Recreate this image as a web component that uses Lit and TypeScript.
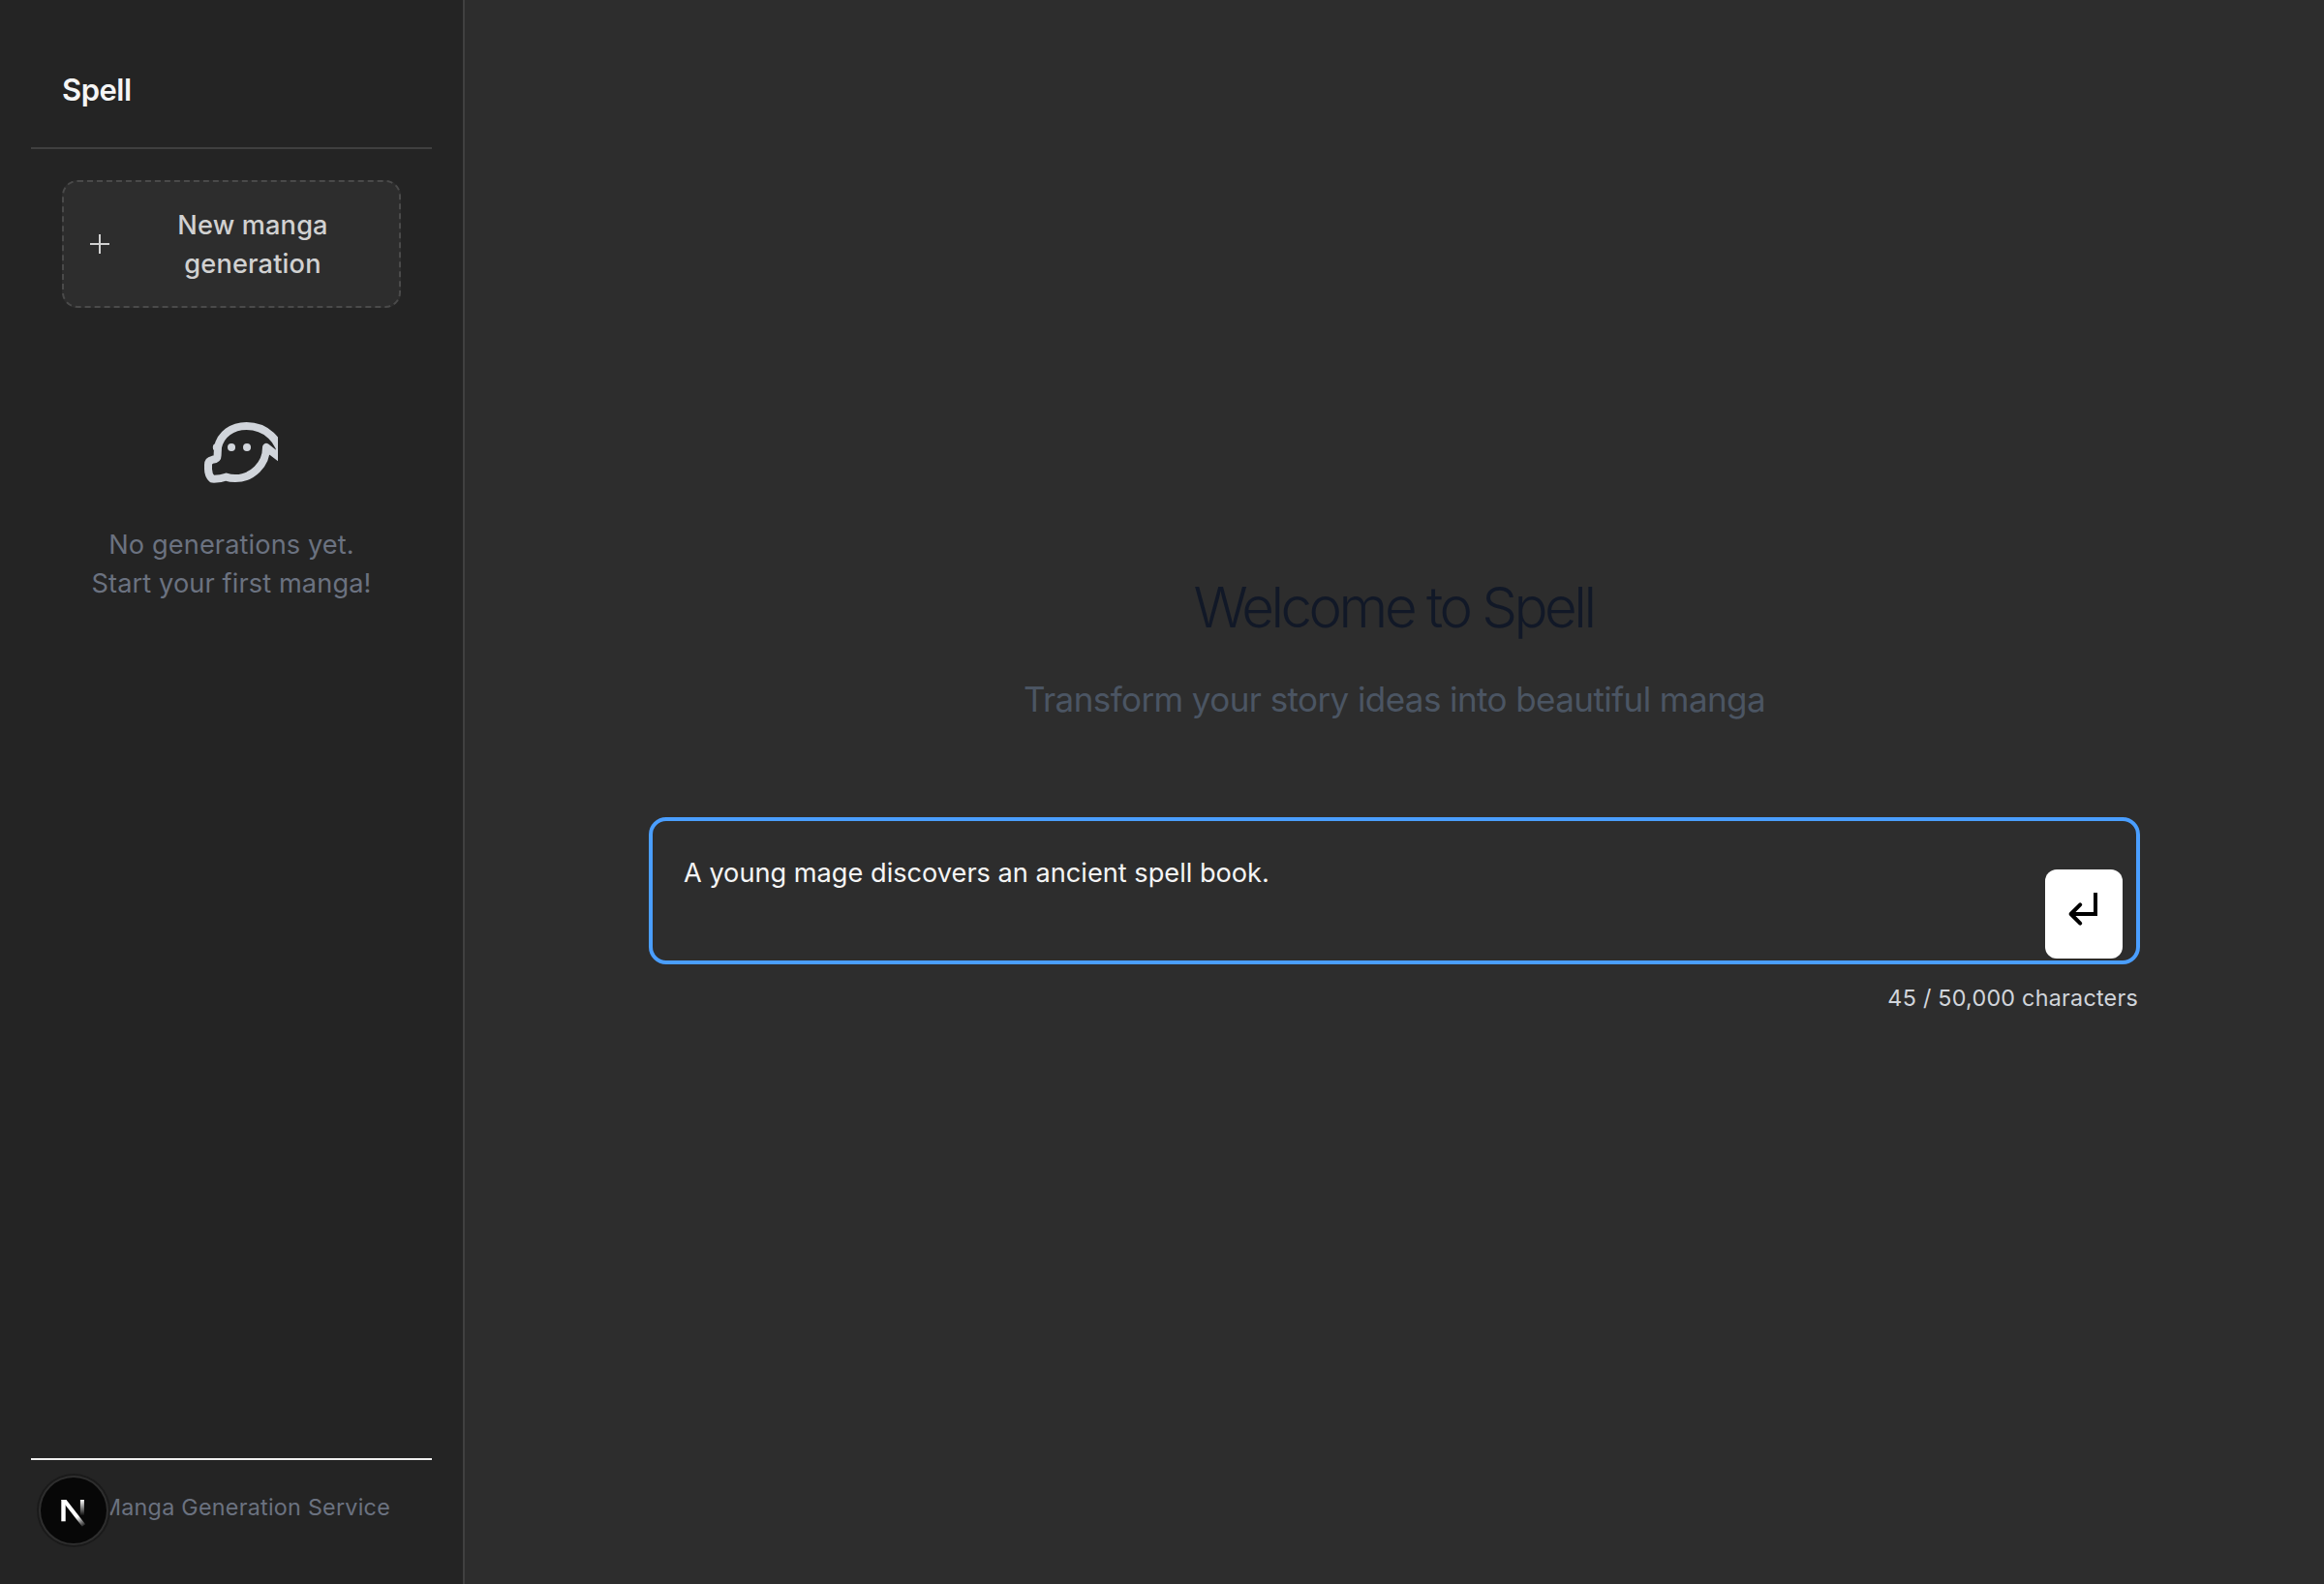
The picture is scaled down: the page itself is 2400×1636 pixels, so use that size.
import { LitElement, html, css } from "lit";
import { customElement, property } from "lit/decorators.js";

@customElement("spell-sidebar")
class SpellSidebar extends LitElement {
  static styles = css`
    :host { display: flex; flex-direction: column; box-sizing: border-box; width: 480px; height: 100%;
      padding: 32px; background: #242424; border-right: 2px solid #404040; position: relative; }
    .header { box-sizing: border-box; height: 122px; padding: 41px 32px 0; border-bottom: 2px solid #404040; }
    .title { margin: 0; font-size: 31px; line-height: 40px; font-weight: 600; letter-spacing: -0.5px; color: #f5f5f5; }
    .new { box-sizing: border-box; margin: 32px 32px 0; height: 132px; padding: 2px 25px 0 25px; display: flex; align-items: center;
      gap: 20px; font: inherit; color: #d1d1d1; background: #2d2d2d; border: 2px dashed #4a4a4a; border-radius: 16px; }
    .plus { width: 24px; height: 24px; flex: none; margin-top: -2px; }
    .label { flex: 1; font-size: 27.2px; line-height: 40px; font-weight: 500; letter-spacing: 0.15px; text-align: center; }
    .empty { margin-top: 96px; display: flex; flex-direction: column; align-items: center; gap: 33px; }
    .face { width: 96px; height: 96px; display: block; overflow: hidden; color: #d1d5db; }
    .note { margin: 0; font-size: 27.2px; line-height: 40px; letter-spacing: 0.1px; color: #6b7280; text-align: center; }
    .footer { margin-top: auto; padding: 33px 43px 31px; border-top: 2px solid #f0f0f0; text-align: right;
      font-size: 23.3px; line-height: 32px; letter-spacing: 0.26px; color: #6b7280; white-space: nowrap; }
    .badge { position: absolute; left: 38px; bottom: 38px; width: 76px; height: 76px; display: block; overflow: visible; }
  `;
  render() {
    return html`
      <header class="header"><h1 class="title">Spell</h1></header>
      <button class="new">
        <svg class="plus" viewBox="0 0 24 24" fill="none" stroke="currentColor" stroke-width="2"><path d="M12 2v20M2 12h20" /></svg>
        <span class="label">New manga<br />generation</span>
      </button>
      <section class="empty">
        <svg class="face" viewBox="0 0 24 24" fill="none" stroke="currentColor" stroke-width="2" stroke-linecap="round" stroke-linejoin="round">
          <path d="M8.2 12h.01M12 12h.01M16 12h.01" />
          <path d="M21 12c0 4.418-3.582 8-8 8-.85 0-1.65-.1-2.4-.35-1 .4-2.2.55-3.6.5C6.2 19.3 6 18.5 6 17.6v-1.1c0-.65.4-1.15 1.1-1.3.9-.1 1.3-.5 1.3-1.1l.1-2.1c.7-3.3 3.6-5.5 7.4-5.5 4.9 0 8.9 3.6 9.1 8.6z" />
        </svg>
        <p class="note">No generations yet.<br />Start your first manga!</p>
      </section>
      <footer class="footer">Manga Generation Service</footer>
      <svg class="badge" viewBox="0 0 76 76">
        <defs>
          <linearGradient id="diag" x1="44" y1="43" x2="51" y2="54" gradientUnits="userSpaceOnUse">
            <stop stop-color="#fff" /><stop offset="1" stop-color="#fff" stop-opacity="0" />
          </linearGradient>
          <linearGradient id="bar" x1="0" y1="27" x2="0" y2="43.5" gradientUnits="userSpaceOnUse">
            <stop stop-color="#fff" /><stop offset="1" stop-color="#fff" stop-opacity="0" />
          </linearGradient>
        </defs>
        <circle cx="38" cy="38" r="38" fill="#1a1a1a" />
        <circle cx="38" cy="38" r="36" fill="#2e2e2e" />
        <circle cx="38" cy="38" r="34" fill="#070707" />
        <path d="M25.3 27h4.4v22.3h-4.4z" fill="#fff" />
        <path d="M25.3 27h5.2l19.6 25.3-3.2 2.4z" fill="url(#diag)" />
        <path d="M44.9 27h4v16.5h-4z" fill="url(#bar)" />
      </svg>
    `;
  }
}

@customElement("prompt-box")
class PromptBox extends LitElement {
  @property() value = "";
  @property({ type: Number }) limit = 50000;
  static styles = css`
    :host { display: flex; flex-direction: column; gap: 19px; width: 1540px; }
    .box { box-sizing: border-box; height: 152px; display: flex; justify-content: space-between; align-items: flex-start;
      padding: 34px 14px 2px 32px; border: 4px solid #4a9eff; border-radius: 18px; }
    .text { font-size: 27.2px; line-height: 40px; letter-spacing: -0.013px; color: #f5f5f5; }
    .send { box-sizing: border-box; align-self: flex-end; width: 80px; height: 92px; padding: 0; border: 0; border-radius: 12px; background: #fff; color: #000; display: block; }
    .arrow { display: block; width: 80px; height: 92px; }
    .count { padding-right: 2px; text-align: right; font-size: 23.3px; line-height: 32px; letter-spacing: 0.25px; color: #d1d5db; }
  `;
  render() {
    return html`
      <div class="box">
        <span class="text">${this.value}</span>
        <button class="send">
          <svg class="arrow" viewBox="0 0 80 92" fill="none" stroke="currentColor" stroke-width="4">
            <path d="M52 24v22H27" />
            <path d="M36.2 36.4L26.6 46l9.6 9.6" stroke-linecap="round" stroke-linejoin="round" />
          </svg>
        </button>
      </div>
      <div class="count">${this.value.length} / ${this.limit.toLocaleString("en-US")} characters</div>
    `;
  }
}

@customElement("app-root")
class AppRoot extends LitElement {
  static styles = css`
    :host { display: flex; width: 100%; height: 100vh; overflow: hidden; background: #2d2d2d; font-family: Inter, "Liberation Sans", sans-serif; }
    .main { flex: 1; display: flex; flex-direction: column; align-items: center; padding-top: 587px; box-sizing: border-box; }
    .welcome { margin: 0; padding-right: 2px; font-size: 58.2px; line-height: 80px; font-weight: 300; letter-spacing: -3.49px; color: #111827; }
    .tagline { margin: 27px 0 93px; font-size: 35px; line-height: 57px; letter-spacing: -0.583px; color: #4b5563; }
  `;
  render() {
    return html`
      <spell-sidebar></spell-sidebar>
      <main class="main">
        <h2 class="welcome">Welcome to Spell</h2>
        <p class="tagline">Transform your story ideas into beautiful manga</p>
        <prompt-box value="A young mage discovers an ancient spell book."></prompt-box>
      </main>
    `;
  }
}
